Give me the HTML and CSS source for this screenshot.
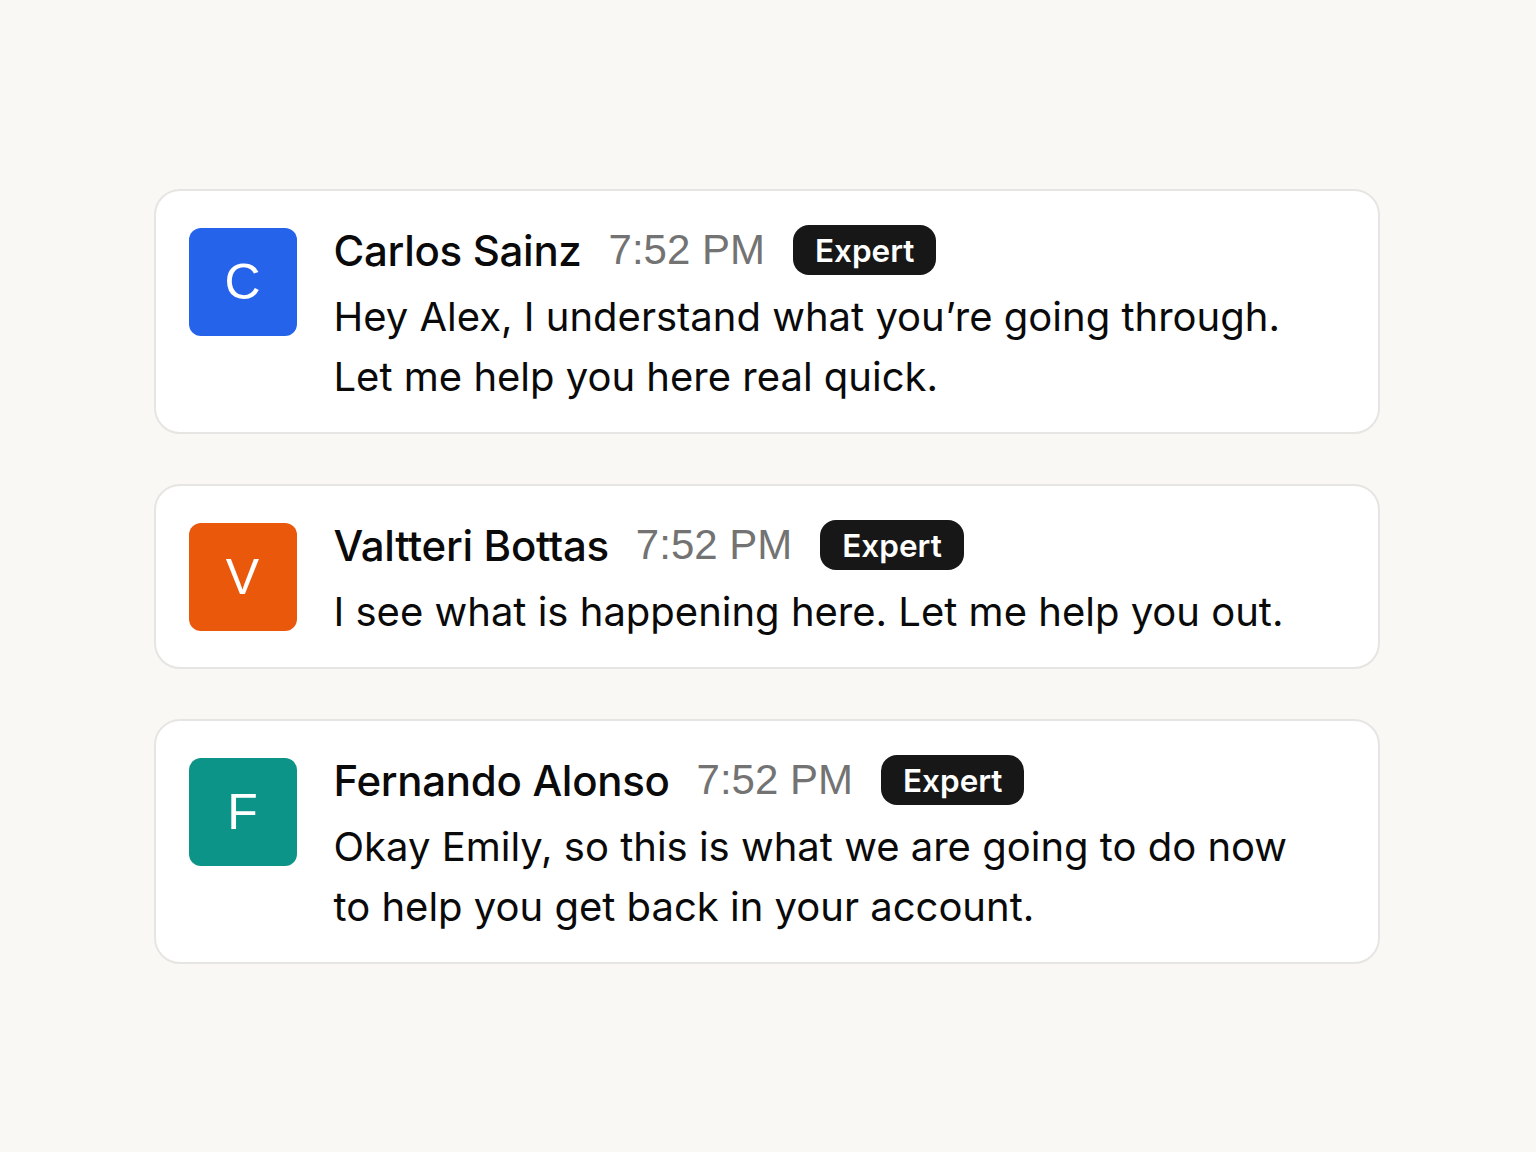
FILE: index.html
```html
<!DOCTYPE html>
<html lang="en">
<head>
<meta charset="utf-8">
<title>Messages</title>
<link rel="stylesheet" href="styles.css">
</head>
<body>
<main class="stack">
  <article class="card">
    <div class="avatar avatar-blue">C</div>
    <div class="content">
      <div class="meta">
        <span class="name">Carlos Sainz</span>
        <span class="time">7:52 PM</span>
        <span class="badge">Expert</span>
      </div>
      <p class="text">Hey Alex, I understand what you’re going through.<br>Let me help you here real quick.</p>
    </div>
  </article>
  <article class="card">
    <div class="avatar avatar-orange">V</div>
    <div class="content">
      <div class="meta">
        <span class="name">Valtteri Bottas</span>
        <span class="time">7:52 PM</span>
        <span class="badge">Expert</span>
      </div>
      <p class="text">I see what is happening here. Let me help you out.</p>
    </div>
  </article>
  <article class="card">
    <div class="avatar avatar-teal">F</div>
    <div class="content">
      <div class="meta">
        <span class="name">Fernando Alonso</span>
        <span class="time">7:52 PM</span>
        <span class="badge">Expert</span>
      </div>
      <p class="text">Okay Emily, so this is what we are going to do now<br>to help you get back in your account.</p>
    </div>
  </article>
</main>
</body>
</html>
```

FILE: styles.css
```css
* { box-sizing: border-box; }
html, body { margin: 0; padding: 0; }
body {
  background: #f9f8f5;
  font-family: Inter, "Noto Sans", sans-serif;
  color: #0a0a0a;
  min-height: 100vh;
}
.stack {
  min-height: 100vh;
  display: flex;
  flex-direction: column;
  justify-content: center;
  align-items: center;
  gap: 50px;
  padding-right: 3px;
  padding-top: 1px;
}
.card {
  width: 1226px;
  background: #ffffff;
  border: 2px solid #e6e5e3;
  border-radius: 26px;
  display: flex;
  gap: 37px;
  padding: 37px 33px 25px 33px;
}
.avatar {
  flex: none;
  width: 108px;
  height: 108px;
  border-radius: 12px;
  display: flex;
  align-items: center;
  justify-content: center;
  color: #ffffff;
  font-family: "Liberation Sans", Arial, sans-serif;
  font-size: 50px;
}
.avatar-blue { background: #2563eb; }
.avatar-orange { background: #ea580c; }
.avatar-teal { background: #0d9488; }
.content {
  display: flex;
  flex-direction: column;
  margin-top: -3px;
}
.meta {
  display: flex;
  align-items: center;
  gap: 27px;
  height: 50px;
}
.name {
  font-size: 42px;
  font-weight: 500;
  letter-spacing: -0.3px;
}
.time {
  font-family: "Liberation Sans", Arial, sans-serif;
  font-size: 42px;
  color: #737373;
}
.badge {
  background: #171717;
  color: #ffffff;
  font-size: 31.5px;
  font-weight: 600;
  height: 50px;
  padding: 0 22px;
  border-radius: 16px;
  display: flex;
  align-items: center;
  margin-left: 1px;
}
.text {
  margin: 12px 0 0 0;
  font-size: 40px;
  line-height: 60px;
}
```
